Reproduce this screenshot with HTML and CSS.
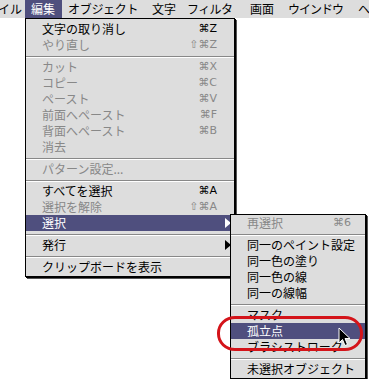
FILE: index.html
```html
<!DOCTYPE html>
<html lang="ja">
<head>
<meta charset="utf-8">
<link rel="stylesheet" href="styles.css">
</head>
<body>
<div class="screen">
  <div class="menubar">
    <span class="mb-item mb-file">ファイル</span>
    <span class="mb-item mb-edit mb-active">編集</span>
    <span class="mb-item mb-obj">オブジェクト</span>
    <span class="mb-item mb-type">文字</span>
    <span class="mb-item mb-filter">フィルタ</span>
    <span class="mb-item mb-view">画面</span>
    <span class="mb-item mb-win">ウインドウ</span>
    <span class="mb-item mb-help">ヘルプ</span>
  </div>

  <div class="menu menu-edit">
    <div class="item"><span class="label">文字の取り消し</span><span class="key">⌘Z</span></div>
    <div class="item dis"><span class="label">やり直し</span><span class="key">⇧⌘Z</span></div>
    <div class="sep"></div>
    <div class="item dis"><span class="label">カット</span><span class="key">⌘X</span></div>
    <div class="item dis"><span class="label">コピー</span><span class="key">⌘C</span></div>
    <div class="item dis"><span class="label">ペースト</span><span class="key">⌘V</span></div>
    <div class="item dis"><span class="label">前面へペースト</span><span class="key">⌘F</span></div>
    <div class="item dis"><span class="label">背面へペースト</span><span class="key">⌘B</span></div>
    <div class="item dis"><span class="label">消去</span></div>
    <div class="sep"></div>
    <div class="item dis"><span class="label">パターン設定...</span></div>
    <div class="sep"></div>
    <div class="item"><span class="label">すべてを選択</span><span class="key">⌘A</span></div>
    <div class="item dis"><span class="label">選択を解除</span><span class="key">⇧⌘A</span></div>
    <div class="item hi"><span class="label">選択</span><span class="arrow"></span></div>
    <div class="sep"></div>
    <div class="item"><span class="label">発行</span><span class="arrow"></span></div>
    <div class="sep"></div>
    <div class="item"><span class="label">クリップボードを表示</span></div>
  </div>

  <div class="menu menu-sub">
    <div class="item dis"><span class="label">再選択</span><span class="key">⌘6</span></div>
    <div class="sep"></div>
    <div class="item"><span class="label">同一のペイント設定</span></div>
    <div class="item"><span class="label">同一色の塗り</span></div>
    <div class="item"><span class="label">同一色の線</span></div>
    <div class="item"><span class="label">同一の線幅</span></div>
    <div class="sep"></div>
    <div class="item"><span class="label">マスク</span></div>
    <div class="item hi"><span class="label">孤立点</span></div>
    <div class="item"><span class="label">ブラシストローク</span></div>
    <div class="sep"></div>
    <div class="item"><span class="label">未選択オブジェクト</span></div>
  </div>

  <div class="ring"></div>

  <svg class="cursor" width="14" height="22" viewBox="0 0 14 22">
    <path d="M1 1 L1 16 L4.5 12.5 L7 18.5 L9.5 17.5 L7 11.5 L12 11.5 Z" fill="#000" stroke="#fff" stroke-width="1"/>
  </svg>
</div>
</body>
</html>
```

FILE: styles.css
```css
* { box-sizing: border-box; }
html, body {
  margin: 0;
  padding: 0;
  background: #fff;
}
.screen {
  position: relative;
  width: 369px;
  height: 379px;
  overflow: hidden;
  background: #fff;
  font-family: "Noto Sans CJK JP", "DejaVu Sans", sans-serif;
  font-size: 12px;
  color: #000;
}
.menubar {
  display: flex;
  height: 18px;
  background: #dddddd;
  white-space: nowrap;
  margin-left: -26px;
}
.mb-item {
  display: block;
  flex: none;
  height: 18px;
  line-height: 18px;
  padding-left: 6px;
  overflow: hidden;
}
.mb-file { width: 51px; padding-left: 0; }
.mb-edit { width: 37px; }
.mb-obj { width: 84px; letter-spacing: -0.3px; }
.mb-type { width: 35px; }
.mb-filter { width: 63px; letter-spacing: -0.6px; }
.mb-view { width: 38px; }
.mb-win { width: 70px; letter-spacing: -1px; }
.mb-help { width: 60px; }
.mb-active {
  background: #4f4f7e;
  color: #fff;
}
.menu {
  position: absolute;
  background: #dddddd;
  border: 1px solid #000;
  box-shadow: 1px 1px 0 #000, 2px 2px 0 #555;
  display: flex;
  flex-direction: column;
}
.menu-edit {
  left: 25px;
  top: 18px;
  width: 210px;
  padding: 2px 0 1px;
}
.menu-sub {
  left: 230px;
  top: 214px;
  width: 136px;
  padding: 0 0 1px;
}
.item {
  display: flex;
  align-items: center;
  height: 16px;
  line-height: 16px;
  padding: 0 17px 0 16px;
  white-space: nowrap;
}
.dis { color: #888; }
.hi {
  background: #4f4f7e;
  color: #fff;
}
.key {
  margin-left: auto;
  font-family: "DejaVu Sans", sans-serif;
  font-size: 11px;
}
.menu-sub .item { padding-right: 14px; }
.arrow {
  margin-left: auto;
  margin-right: -14px;
  width: 0;
  height: 0;
  border-top: 5px solid transparent;
  border-bottom: 5px solid transparent;
  border-left: 6px solid #000;
}
.hi .arrow { border-left-color: #fff; }
.sep {
  height: 6px;
  display: flex;
  flex-direction: column;
  justify-content: center;
}
.sep::before {
  content: "";
  display: block;
  height: 1px;
  background: #888;
  box-shadow: 0 1px 0 #fff;
}
.ring {
  position: absolute;
  left: 217px;
  top: 316px;
  width: 146px;
  height: 35px;
  border: 3px solid #d4141a;
  border-radius: 18px / 17px;
}
.cursor {
  position: absolute;
  left: 338px;
  top: 327px;
}
```
